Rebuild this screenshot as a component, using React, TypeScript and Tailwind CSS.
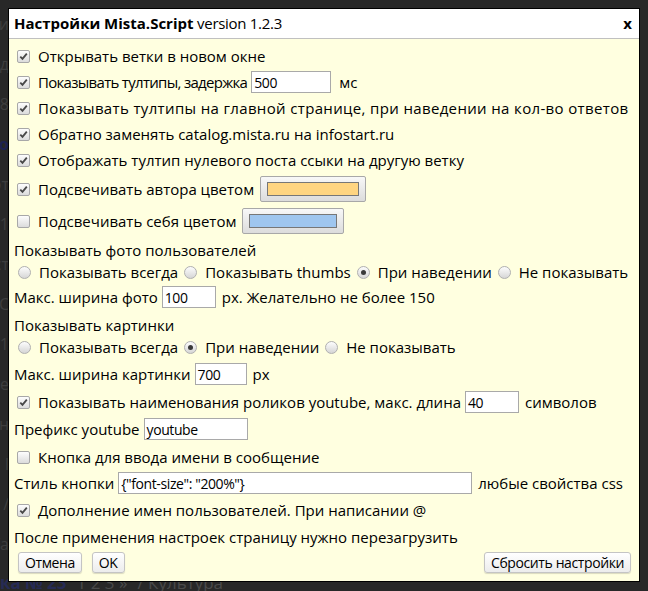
import React from 'react';

const font = { fontFamily: '"Open Sans", "Noto Sans", sans-serif' };

function Checkbox({ checked }: { checked?: boolean }) {
  return (
    <span className="ml-[3px] mr-[8px] flex h-[13px] w-[13px] shrink-0 items-center justify-center rounded-[2px] border border-[#a8a8a8] bg-gradient-to-b from-[#fdfdfd] to-[#dcdcdc]">
      {checked && (
        <svg width="9" height="9" viewBox="0 0 9 9">
          <path d="M1.3 4.6 L3.5 6.9 L7.8 1.6" fill="none" stroke="#484848" strokeWidth="1.8" />
        </svg>
      )}
    </span>
  );
}

function Radio({ checked }: { checked?: boolean }) {
  return (
    <span className="mr-[8px] flex h-[13px] w-[13px] shrink-0 items-center justify-center rounded-full border border-[#b0b0b0] bg-gradient-to-b from-[#fdfdfd] to-[#d6d6d6]">
      {checked && <span className="h-[5px] w-[5px] rounded-full bg-[#3a3a3a]" />}
    </span>
  );
}

function TextInput({ value, w }: { value: string; w: string }) {
  return (
    <span className={`mx-[4px] flex h-[22px] items-center border border-[#a9a9a9] bg-white px-[2px] text-[14px] tracking-[-0.4px] text-black ${w}`}>
      {value}
    </span>
  );
}

function ColorBox({ color, w }: { color: string; w: string }) {
  return (
    <span className={`ml-[6px] flex h-[26px] items-center rounded-[2px] border border-[#a8a8a8] bg-gradient-to-b from-[#f8f8f8] to-[#dcdcdc] px-[6px] ${w}`}>
      <span className="h-[14px] w-full border border-[#777]" style={{ background: color }} />
    </span>
  );
}

function Btn({ label }: { label: string }) {
  return (
    <span className="flex h-[21px] items-center rounded-[3px] border border-[#c4c4c4] bg-gradient-to-b from-white to-[#ececec] px-[6px] text-[14px] tracking-[-0.4px] text-black shadow-[0_1px_1px_rgba(0,0,0,0.15)]">
      {label}
    </span>
  );
}

const Row = ({ h, children }: { h: string; children: React.ReactNode }) => (
  <div className={`flex items-center whitespace-nowrap ${h}`}>{children}</div>
);

export default function App() {
  return (
    <div className="relative h-[591px] w-[648px] overflow-hidden bg-[#282828]" style={font}>
      {/* page behind the modal */}
      <div className="flex h-full flex-col text-[16px] text-[#3e3e3e]">
        <div className="flex h-[578px] flex-col pt-[12px]">
          {['и', 'д', '8', 'о', 'от', '1', 'ст', 'С', '1', 'не', 'н', 'l', '/', 'Та'].map((t, i) => (
            <div key={i} className="flex h-[40px] w-[9px] justify-end overflow-hidden whitespace-nowrap">
              <span className={i === 3 ? 'font-bold text-[#1d2250]' : ''}>{t}</span>
            </div>
          ))}
        </div>
        <div className="flex gap-[10px] whitespace-nowrap text-[17px] leading-none">
          <span className="font-bold text-[#262b55]">ка № 23</span>
          <span className="text-[#4a4a4a]">1 2 3 »</span>
          <span className="text-[#4a4a4a]">/ Культура</span>
        </div>
      </div>

      {/* modal */}
      <div className="absolute left-[8px] top-[8px] flex w-[632px] flex-col border border-black bg-[#ffffe0] text-[15px] text-black">
        <div className="flex h-[30px] items-center justify-between border-b border-[#c0c0c0] bg-white pl-[5px] pr-[7px] text-[15px]">
          <div>
            <span className="font-bold">Настройки Mista.Script</span>
            <span className="tracking-[-0.3px]"> version 1.2.3</span>
          </div>
          <span className="font-bold">x</span>
        </div>

        <div className="flex flex-col pl-[5px] pr-[8px] pt-[4px] pb-[8px]">
          <Row h="h-[26px]">
            <Checkbox checked />Открывать ветки в новом окне
          </Row>
          <Row h="h-[26px]">
            <Checkbox checked />
            <span className="tracking-[-0.7px]">Показывать тултипы, задержка</span>
            <TextInput value="500" w="w-[80px]" />
            <span className="ml-[4px]">мс</span>
          </Row>
          <Row h="h-[26px]">
            <Checkbox checked />
            <span className="tracking-[0.35px]">Показывать тултипы на главной странице, при наведении на кол-во ответов</span>
          </Row>
          <Row h="h-[26px]">
            <Checkbox checked />Обратно заменять catalog.mista.ru на infostart.ru
          </Row>
          <Row h="h-[26px]">
            <Checkbox checked />Отображать тултип нулевого поста ссыки на другую ветку
          </Row>
          <Row h="h-[32px]">
            <Checkbox checked />Подсвечивать автора цветом
            <ColorBox color="#ffd581" w="w-[106px]" />
          </Row>
          <Row h="h-[32px]">
            <Checkbox />Подсвечивать себя цветом
            <ColorBox color="#9fc6ef" w="w-[102px]" />
          </Row>

          <Row h="h-[26px]">Показывать фото пользователей</Row>
          <Row h="h-[18px]">
            <span className="ml-[4px]" />
            <Radio />Показывать всегда<span className="w-[6px]" />
            <Radio />Показывать thumbs<span className="w-[6px]" />
            <Radio checked />При наведении<span className="w-[6px]" />
            <Radio />Не показывать
          </Row>
          <Row h="h-[32px]">
            Макс. ширина фото
            <TextInput value="100" w="w-[54px]" />
            <span className="ml-[2px]">px. Желательно не более 150</span>
          </Row>

          <Row h="h-[24px]">Показывать картинки</Row>
          <Row h="h-[20px]">
            <span className="ml-[4px]" />
            <Radio />Показывать всегда<span className="w-[6px]" />
            <Radio checked />При наведении<span className="w-[6px]" />
            <Radio />Не показывать
          </Row>
          <Row h="h-[34px]">
            Макс. ширина картинки
            <TextInput value="700" w="w-[52px]" />
            <span className="ml-[2px]">px</span>
          </Row>

          <Row h="h-[22px]">
            <Checkbox checked />Показывать наименования роликов youtube, макс. длина
            <TextInput value="40" w="w-[54px]" />
            <span className="ml-[2px]">символов</span>
          </Row>
          <Row h="h-[32px]">
            Префикс youtube
            <TextInput value="youtube" w="w-[104px]" />
          </Row>
          <Row h="h-[24px]">
            <Checkbox />Кнопка для ввода имени в сообщение
          </Row>
          <Row h="h-[28px]">
            Стиль кнопки
            <TextInput value={'{"font-size": "200%"}'} w="w-[354px]" />
            <span className="ml-[2px]">любые свойства css</span>
          </Row>
          <Row h="h-[26px]">
            <Checkbox checked />Дополнение имен пользователей. При написании @
          </Row>
          <Row h="h-[28px]">После применения настроек страницу нужно перезагрузить</Row>

          <div className="flex h-[22px] items-center justify-between pl-[4px]">
            <div className="flex gap-[10px]">
              <Btn label="Отмена" />
              <Btn label="OK" />
            </div>
            <Btn label="Сбросить настройки" />
          </div>
        </div>
      </div>
    </div>
  );
}
